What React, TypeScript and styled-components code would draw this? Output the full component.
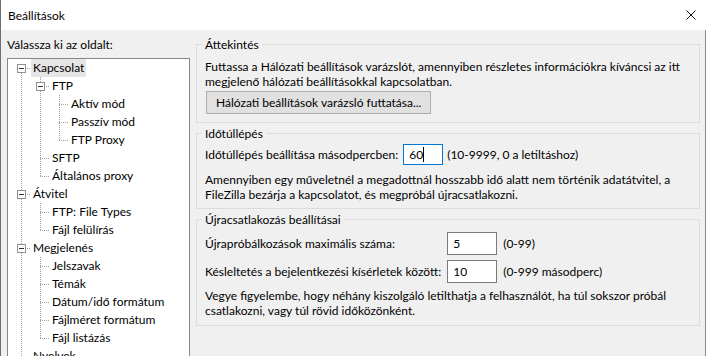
import React from "react";
import styled, { createGlobalStyle } from "styled-components";

const FONT = `Lato, "Noto Sans", "Liberation Sans", sans-serif`;

const Global = createGlobalStyle`
  html, body { margin: 0; padding: 0; background: #ffffff; }
  body { font-family: ${FONT}; font-size: 12px; color: #000; }
  * { box-sizing: border-box; }
`;

const Window = styled.div`
  width: 706px;
  height: 356px;
  overflow: hidden;
  display: flex;
  flex-direction: column;
  border-left: 1px solid #6f6f6f;
  background: #f0f0f0;
`;

const TitleBar = styled.div`
  height: 30px;
  flex: 0 0 30px;
  background: #ffffff;
  display: flex;
  align-items: center;
  justify-content: space-between;
  padding: 0 10px 0 7px;
  font-size: 12px;
  line-height: 15px;
`;

const Body = styled.div`
  flex: 1;
  display: flex;
  gap: 6px;
  padding: 7px 5px 0 6px;
  border-right: 1px solid #8a8a8a;
  min-height: 0;
`;

const LeftCol = styled.div`
  width: 183px;
  flex: 0 0 183px;
  display: flex;
  flex-direction: column;
`;

const Label = styled.div`
  line-height: 15px;
  white-space: nowrap;
`;

const TreeBox = styled.div`
  margin-top: 6px;
  height: 340px;
  flex: 0 0 auto;
  background: #ffffff;
  border: 1px solid #828790;
  padding-left: 4px;
  overflow: hidden;
`;

const Row = styled.div`
  height: 18px;
  display: flex;
  align-items: center;
`;

const Cell = styled.svg`
  width: 19px;
  height: 18px;
  flex: 0 0 19px;
  display: block;
`;

const RowText = styled.span<{ $selected?: boolean }>`
  padding: 0 2px;
  height: 18px;
  line-height: 18px;
  white-space: nowrap;
  background: ${(p) => (p.$selected ? "#e5e5e5" : "transparent")};
`;

const RightCol = styled.div`
  width: 504px;
  flex: 0 0 504px;
  display: flex;
  flex-direction: column;
  gap: 3px;
`;

const Group = styled.fieldset<{ $pt?: number; $pb?: number }>`
  margin: 0;
  border: 1px solid #dcdcdc;
  padding: ${(p) => p.$pt ?? 7}px 8px ${(p) => p.$pb ?? 6}px 8px;
  min-width: 0;
`;

const GroupTitle = styled.legend`
  padding: 0 3px;
  margin-left: -3px;
  line-height: 15px;
`;

const Para = styled.div<{ $mt?: number }>`
  line-height: 15px;
  white-space: nowrap;
  margin-top: ${(p) => p.$mt ?? 0}px;
`;

const Button = styled.button`
  margin: 2px 0 0 1px;
  height: 23px;
  padding: 0 9px;
  background: #e1e1e1;
  border: 1px solid #adadad;
  font-family: ${FONT};
  font-size: 12px;
  color: #000;
  border-radius: 0;
`;

const FieldRow = styled.div<{ $mt?: number }>`
  display: flex;
  align-items: center;
  margin-top: ${(p) => p.$mt ?? 0}px;
  white-space: nowrap;
`;

const FieldGrid = styled.div`
  display: grid;
  grid-template-columns: auto 50px auto;
  justify-content: start;
  column-gap: 6px;
  row-gap: 5px;
  align-items: center;
  white-space: nowrap;
`;

const Hint = styled.span<{ $ml?: number }>`
  margin-left: ${(p) => p.$ml ?? 0}px;
`;

const Field = styled.div<{ $w: number; $h: number; $focused?: boolean; $ml?: number }>`
  width: ${(p) => p.$w}px;
  height: ${(p) => p.$h}px;
  margin-left: ${(p) => p.$ml ?? 0}px;
  background: #ffffff;
  border: 1px solid ${(p) => (p.$focused ? "#0078d7" : "#7a7a7a")};
  padding-left: 5px;
  display: flex;
  align-items: center;
  line-height: 15px;
`;

const Caret = styled.span`
  display: inline-block;
  width: 1px;
  height: 15px;
  background: #000;
`;

type Node = { label: string; selected?: boolean; children?: Node[] };

const tree: Node[] = [
  {
    label: "Kapcsolat",
    selected: true,
    children: [
      {
        label: "FTP",
        children: [{ label: "Aktív mód" }, { label: "Passzív mód" }, { label: "FTP Proxy" }],
      },
      { label: "SFTP" },
      { label: "Általános proxy" },
    ],
  },
  {
    label: "Átvitel",
    children: [{ label: "FTP: File Types" }, { label: "Fájl felülírás" }],
  },
  {
    label: "Megjelenés",
    children: [
      { label: "Jelszavak" },
      { label: "Témák" },
      { label: "Dátum/idő formátum" },
      { label: "Fájlméret formátum" },
      { label: "Fájl listázás" },
    ],
  },
  { label: "Nyelvek" },
  {
    label: "Fájlszerkesztés",
    children: [{ label: "Fájltípus társítások" }],
  },
];

type Flat = { node: Node; guides: boolean[]; last: boolean; first: boolean };

function flatten(nodes: Node[], guides: boolean[], out: Flat[], root: boolean) {
  nodes.forEach((n, i) => {
    const last = i === nodes.length - 1;
    out.push({ node: n, guides, last, first: root && i === 0 });
    if (n.children) flatten(n.children, [...guides, !last], out, false);
  });
  return out;
}

const LINE = "#a0a0a0";

const Guide: React.FC<{ on: boolean }> = ({ on }) => (
  <Cell viewBox="0 0 19 18" shapeRendering="crispEdges">
    {on && <line x1="9.5" y1="0" x2="9.5" y2="18" stroke={LINE} strokeDasharray="1 1" />}
  </Cell>
);

const Connector: React.FC<{ first: boolean; last: boolean; box: boolean }> = ({ first, last, box }) => (
  <Cell viewBox="0 0 19 18" shapeRendering="crispEdges">
    {!first && <line x1="9.5" y1="0" x2="9.5" y2="9" stroke={LINE} strokeDasharray="1 1" />}
    {!last && <line x1="9.5" y1="10" x2="9.5" y2="18" stroke={LINE} strokeDasharray="1 1" />}
    <line x1={box ? 15 : 11} y1="9.5" x2="19" y2="9.5" stroke={LINE} strokeDasharray="1 1" />
    {!box && <rect x="9" y="9" width="1" height="1" fill={LINE} />}
    {box && (
      <>
        <rect x="5.5" y="5.5" width="8" height="8" fill="#ffffff" stroke="#919191" />
        <line x1="7" y1="9.5" x2="12" y2="9.5" stroke="#303030" />
      </>
    )}
  </Cell>
);

const Tree: React.FC = () => {
  const rows = flatten(tree, [], [], true);
  return (
    <TreeBox>
      {rows.map((r, i) => (
        <Row key={i}>
          {r.guides.map((g, j) => (
            <Guide key={j} on={g} />
          ))}
          <Connector first={r.first} last={r.last} box={!!r.node.children} />
          <RowText $selected={r.node.selected}>{r.node.label}</RowText>
        </Row>
      ))}
    </TreeBox>
  );
};

const CloseIcon = () => (
  <svg width="10" height="10" viewBox="0 0 10 10">
    <path d="M0.5 0.5 L9.5 9.5 M9.5 0.5 L0.5 9.5" stroke="#111" strokeWidth="1" fill="none" />
  </svg>
);

export default function App() {
  return (
    <>
      <Global />
      <Window>
        <TitleBar>
          <span>Beállítások</span>
          <CloseIcon />
        </TitleBar>
        <Body>
          <LeftCol>
            <Label>Válassza ki az oldalt:</Label>
            <Tree />
          </LeftCol>
          <RightCol>
            <Group $pb={8}>
              <GroupTitle>Áttekintés</GroupTitle>
              <Para>
                Futtassa a Hálózati beállítások varázslót, amennyiben részletes információkra kíváncsi az itt
                <br />
                megjelenő hálózati beállításokkal kapcsolatban.
              </Para>
              <div>
                <Button type="button">Hálózati beállítások varázsló futtatása...</Button>
              </div>
            </Group>
            <Group $pb={6}>
              <GroupTitle>Időtúllépés</GroupTitle>
              <FieldRow $mt={-4}>
                <span>Időtúllépés beállítása másodpercben:</span>
                <Field $w={40} $h={21} $focused $ml={5}>
                  60
                  <Caret />
                </Field>
                <Hint $ml={4}>(10-9999, 0 a letiltáshoz)</Hint>
              </FieldRow>
              <Para $mt={7}>
                Amennyiben egy műveletnél a megadottnál hosszabb idő alatt nem történik adatátvitel, a
                <br />
                FileZilla bezárja a kapcsolatot, és megpróbál újracsatlakozni.
              </Para>
            </Group>
            <Group $pt={5} $pb={7}>
              <GroupTitle>Újracsatlakozás beállításai</GroupTitle>
              <FieldGrid>
                <span>Újrapróbálkozások maximális száma:</span>
                <Field $w={50} $h={23}>5</Field>
                <Hint>(0-99)</Hint>
                <span>Késleltetés a bejelentkezési kísérletek között:</span>
                <Field $w={50} $h={23}>10</Field>
                <Hint>(0-999 másodperc)</Hint>
              </FieldGrid>
              <Para $mt={5}>
                Vegye figyelembe, hogy néhány kiszolgáló letilthatja a felhasználót, ha túl sokszor próbál
                <br />
                csatlakozni, vagy túl rövid időközönként.
              </Para>
            </Group>
          </RightCol>
        </Body>
      </Window>
    </>
  );
}
